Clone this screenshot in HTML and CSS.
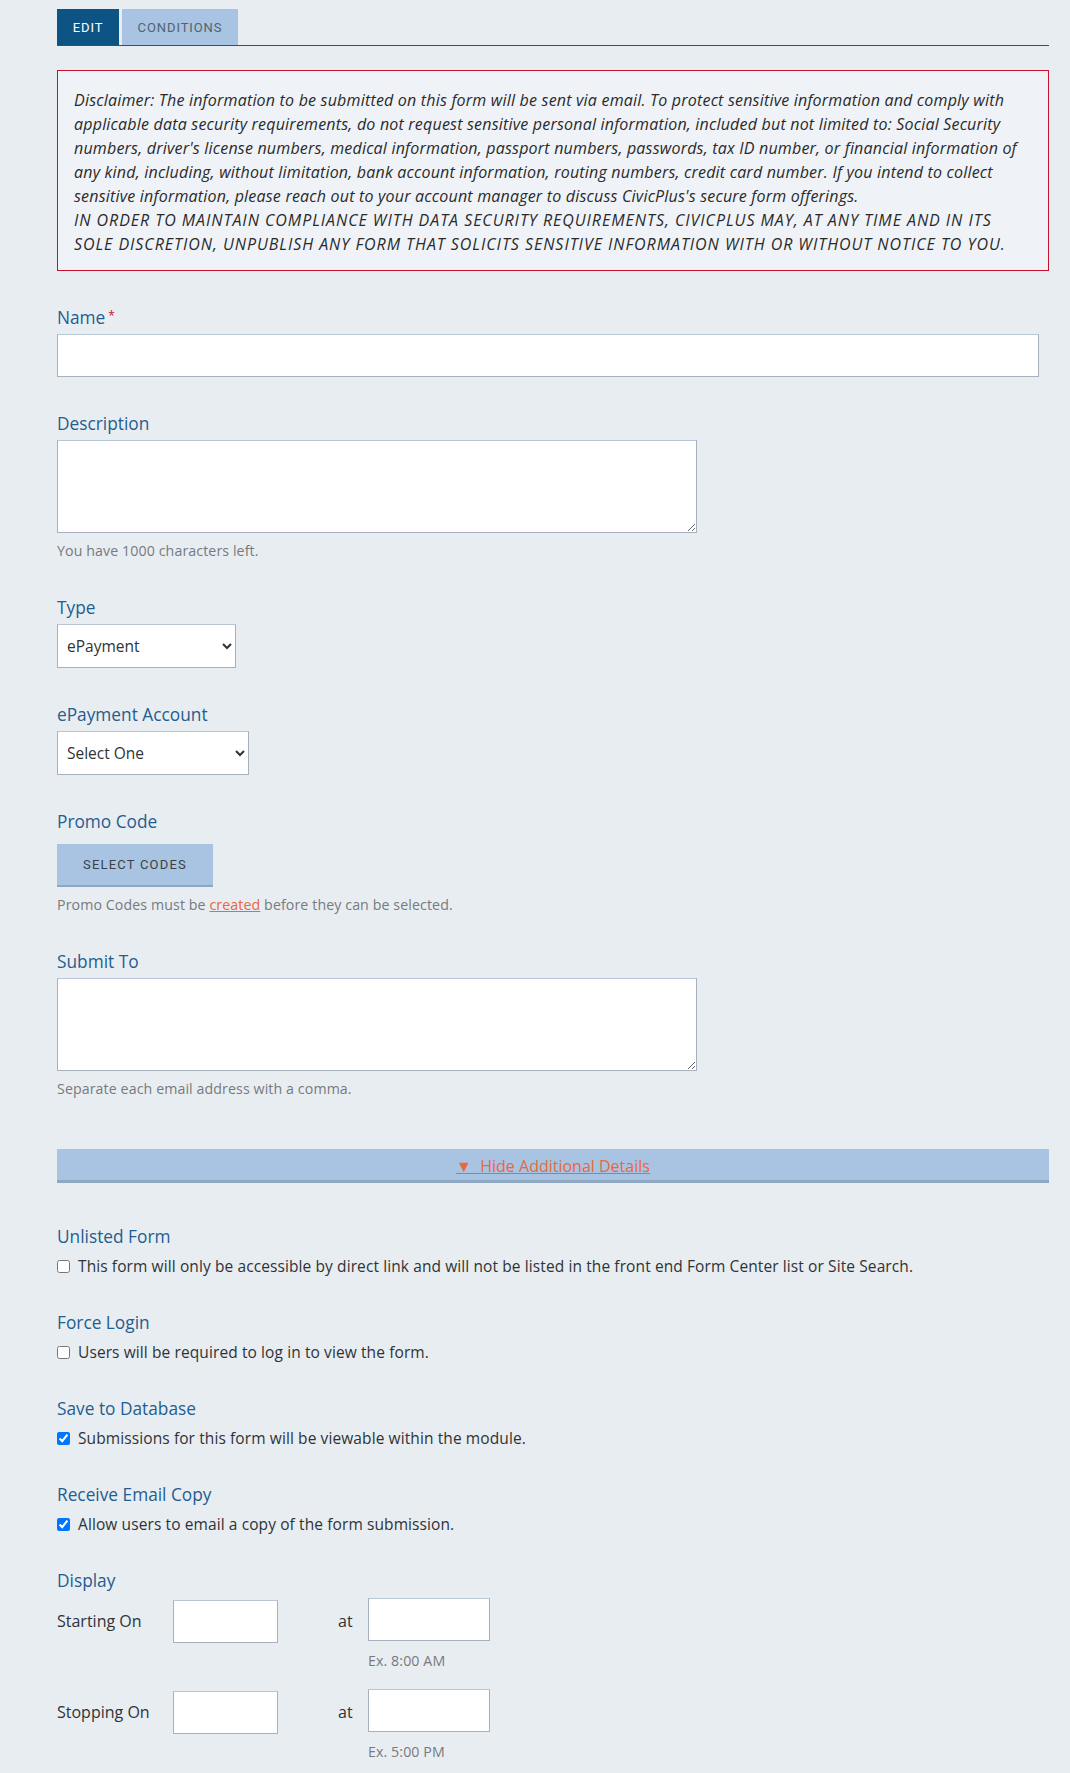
FILE: index.html
```html
<!DOCTYPE html>
<html lang="en">
<head>
<meta charset="utf-8">
<title>Edit Form</title>
<link rel="stylesheet" href="styles.css">
</head>
<body>
<div class="page">
  <div class="tabs">
    <a class="tab tab-active">EDIT</a>
    <a class="tab">CONDITIONS</a>
  </div>

  <div class="disclaimer">
    <p>Disclaimer: The information to be submitted on this form will be sent via email. To protect sensitive information and comply with applicable data security requirements, do not request sensitive personal information, included but not limited to: Social Security numbers, driver's license numbers, medical information, passport numbers, passwords, tax ID number, or financial information of any kind, including, without limitation, bank account information, routing numbers, credit card number. If you intend to collect sensitive information, please reach out to your account manager to discuss CivicPlus's secure form offerings.<br><span class="notice-caps">IN ORDER TO MAINTAIN COMPLIANCE WITH DATA SECURITY REQUIREMENTS, CIVICPLUS MAY, AT ANY TIME AND IN ITS SOLE DISCRETION, UNPUBLISH ANY FORM THAT SOLICITS SENSITIVE INFORMATION WITH OR WITHOUT NOTICE TO YOU.</span></p>
  </div>

  <div class="field field-first">
    <label class="field-label">Name<span class="req">*</span></label>
    <input class="text-input input-name" type="text">
  </div>

  <div class="field">
    <label class="field-label">Description</label>
    <textarea class="text-area"></textarea>
    <div class="help">You have 1000 characters left.</div>
  </div>

  <div class="field">
    <label class="field-label">Type</label>
    <select class="select select-type"><option>ePayment</option></select>
  </div>

  <div class="field">
    <label class="field-label">ePayment Account</label>
    <select class="select select-account"><option>Select One</option></select>
  </div>

  <div class="field">
    <label class="field-label">Promo Code</label>
    <button class="btn" type="button">SELECT CODES</button>
    <div class="help">Promo Codes must be <a class="link">created</a> before they can be selected.</div>
  </div>

  <div class="field">
    <label class="field-label">Submit To</label>
    <textarea class="text-area"></textarea>
    <div class="help">Separate each email address with a comma.</div>
  </div>

  <div class="toggle-bar"><a class="link toggle-link">&#9660;&nbsp; Hide Additional Details</a></div>

  <div class="check-field first">
    <div class="field-label">Unlisted Form</div>
    <label class="check-row"><input type="checkbox"> This form will only be accessible by direct link and will not be listed in the front end Form Center list or Site Search.</label>
  </div>

  <div class="check-field">
    <div class="field-label">Force Login</div>
    <label class="check-row"><input type="checkbox"> Users will be required to log in to view the form.</label>
  </div>

  <div class="check-field">
    <div class="field-label">Save to Database</div>
    <label class="check-row"><input type="checkbox" checked> Submissions for this form will be viewable within the module.</label>
  </div>

  <div class="check-field">
    <div class="field-label">Receive Email Copy</div>
    <label class="check-row"><input type="checkbox" checked> Allow users to email a copy of the form submission.</label>
  </div>

  <div class="check-field">
    <div class="field-label">Display</div>
    <div class="display-row">
      <span class="display-label">Starting On</span>
      <input class="text-input date-input" type="text">
      <span class="at">at</span>
      <div class="time-col">
        <input class="text-input time-input" type="text">
        <div class="help time-help">Ex. 8:00 AM</div>
      </div>
    </div>
    <div class="display-row second">
      <span class="display-label">Stopping On</span>
      <input class="text-input date-input" type="text">
      <span class="at">at</span>
      <div class="time-col">
        <input class="text-input time-input" type="text">
        <div class="help time-help">Ex. 5:00 PM</div>
      </div>
    </div>
  </div>
</div>
</body>
</html>
```

FILE: styles.css
```css
html, body {
  margin: 0;
  padding: 0;
  background: #e8edf2;
}

body {
  font-family: "Open Sans", "Liberation Sans", sans-serif;
  font-size: 15.5px;
  color: #2f3336;
}

.page {
  width: 992px;
  padding: 9px 0 40px 57px;
}

/* Tabs */
.tabs {
  display: flex;
  gap: 3px;
  border-bottom: 1px solid #17598c;
}

.tab {
  display: flex;
  align-items: center;
  justify-content: center;
  height: 36px;
  font-family: "Roboto", "Liberation Sans", sans-serif;
  font-size: 13px;
  letter-spacing: 0.9px;
  color: #55616e;
  background: #a8c4e2;
  width: 116px;
}

.tab-active {
  width: 62px;
  background: #0d5485;
  color: #ffffff;
}

/* Disclaimer */
.disclaimer {
  margin-top: 24px;
  border: 1px solid #c8102e;
  background: #eff3f8;
  padding: 17px 16px 14px 16px;
}

.disclaimer p {
  margin: 0;
  font-style: italic;
  font-size: 16px;
  letter-spacing: 0.2px;
  line-height: 24px;
  color: #2a2a2a;
}

.notice-caps {
  letter-spacing: 0.95px;
}

/* Fields */
.field {
  margin-top: 35px;
}

.field-first {
  margin-top: 33px;
}

.field-label {
  display: block;
  font-size: 17.3px;
  line-height: 24px;
  color: #245d8f;
  margin-bottom: 4px;
}

.req {
  color: #c8102e;
  font-size: 12px;
  margin-left: 3px;
  vertical-align: 4px;
}

.text-input,
.text-area,
.select {
  display: block;
  box-sizing: border-box;
  border: 1px solid #a6b1bd;
  border-top-color: #b8c7d6;
  background: #ffffff;
  font-family: "Open Sans", "Liberation Sans", sans-serif;
  font-size: 15.5px;
  color: #2f3336;
  margin: 0;
}

.input-name {
  width: 982px;
  height: 43px;
}

.text-area {
  width: 640px;
  height: 93px;
  resize: both;
}

.select {
  height: 44px;
  padding: 0 5px;
}

.select-type {
  width: 179px;
}

.select-account {
  width: 192px;
}

.help {
  margin-top: 8px;
  font-size: 14.2px;
  letter-spacing: 0.1px;
  line-height: 20px;
  color: #777a7d;
}

.link {
  color: #e8683f;
  text-decoration: underline;
  cursor: pointer;
}

.btn {
  display: block;
  margin-top: 10px;
  width: 156px;
  height: 43px;
  border: 0;
  border-bottom: 2px solid #8ca6c4;
  background: #a8c4e2;
  font-family: "Roboto", "Liberation Sans", sans-serif;
  font-size: 13px;
  letter-spacing: 1.2px;
  color: #3a4148;
  padding: 0;
}

/* Toggle bar */
.toggle-bar {
  margin-top: 50px;
  height: 31px;
  background: #a8c4e2;
  border-bottom: 3px solid #8ea8c2;
  display: flex;
  align-items: center;
  justify-content: center;
}

.toggle-link {
  font-size: 16px;
  line-height: 20px;
  padding-top: 3px;
}

/* Check fields */
.check-field {
  margin-top: 33px;
}

.check-field.first {
  margin-top: 42px;
}

.check-field .field-label {
  margin-bottom: 5px;
}

.check-row {
  display: flex;
  align-items: center;
  line-height: 24px;
  font-size: 15.5px;
  letter-spacing: 0.1px;
  color: #2f3336;
}

.check-row input {
  margin: 0 8px 0 0;
  width: 13px;
  height: 13px;
}

/* Display rows */
.display-row {
  display: flex;
  align-items: flex-start;
  margin-top: 4px;
}

.display-row.second {
  margin-top: 18px;
}

.display-label {
  width: 116px;
  flex: none;
  line-height: 43px;
  margin-top: 2px;
  font-size: 16px;
  color: #2f3336;
}

.date-input {
  width: 105px;
  height: 43px;
  margin-top: 2px;
}

.at {
  width: 30px;
  margin-left: 60px;
  line-height: 43px;
  margin-top: 2px;
  font-size: 16px;
  color: #2f3336;
}

.time-input {
  width: 122px;
  height: 43px;
}

.time-help {
  margin-top: 10px;
}
```
